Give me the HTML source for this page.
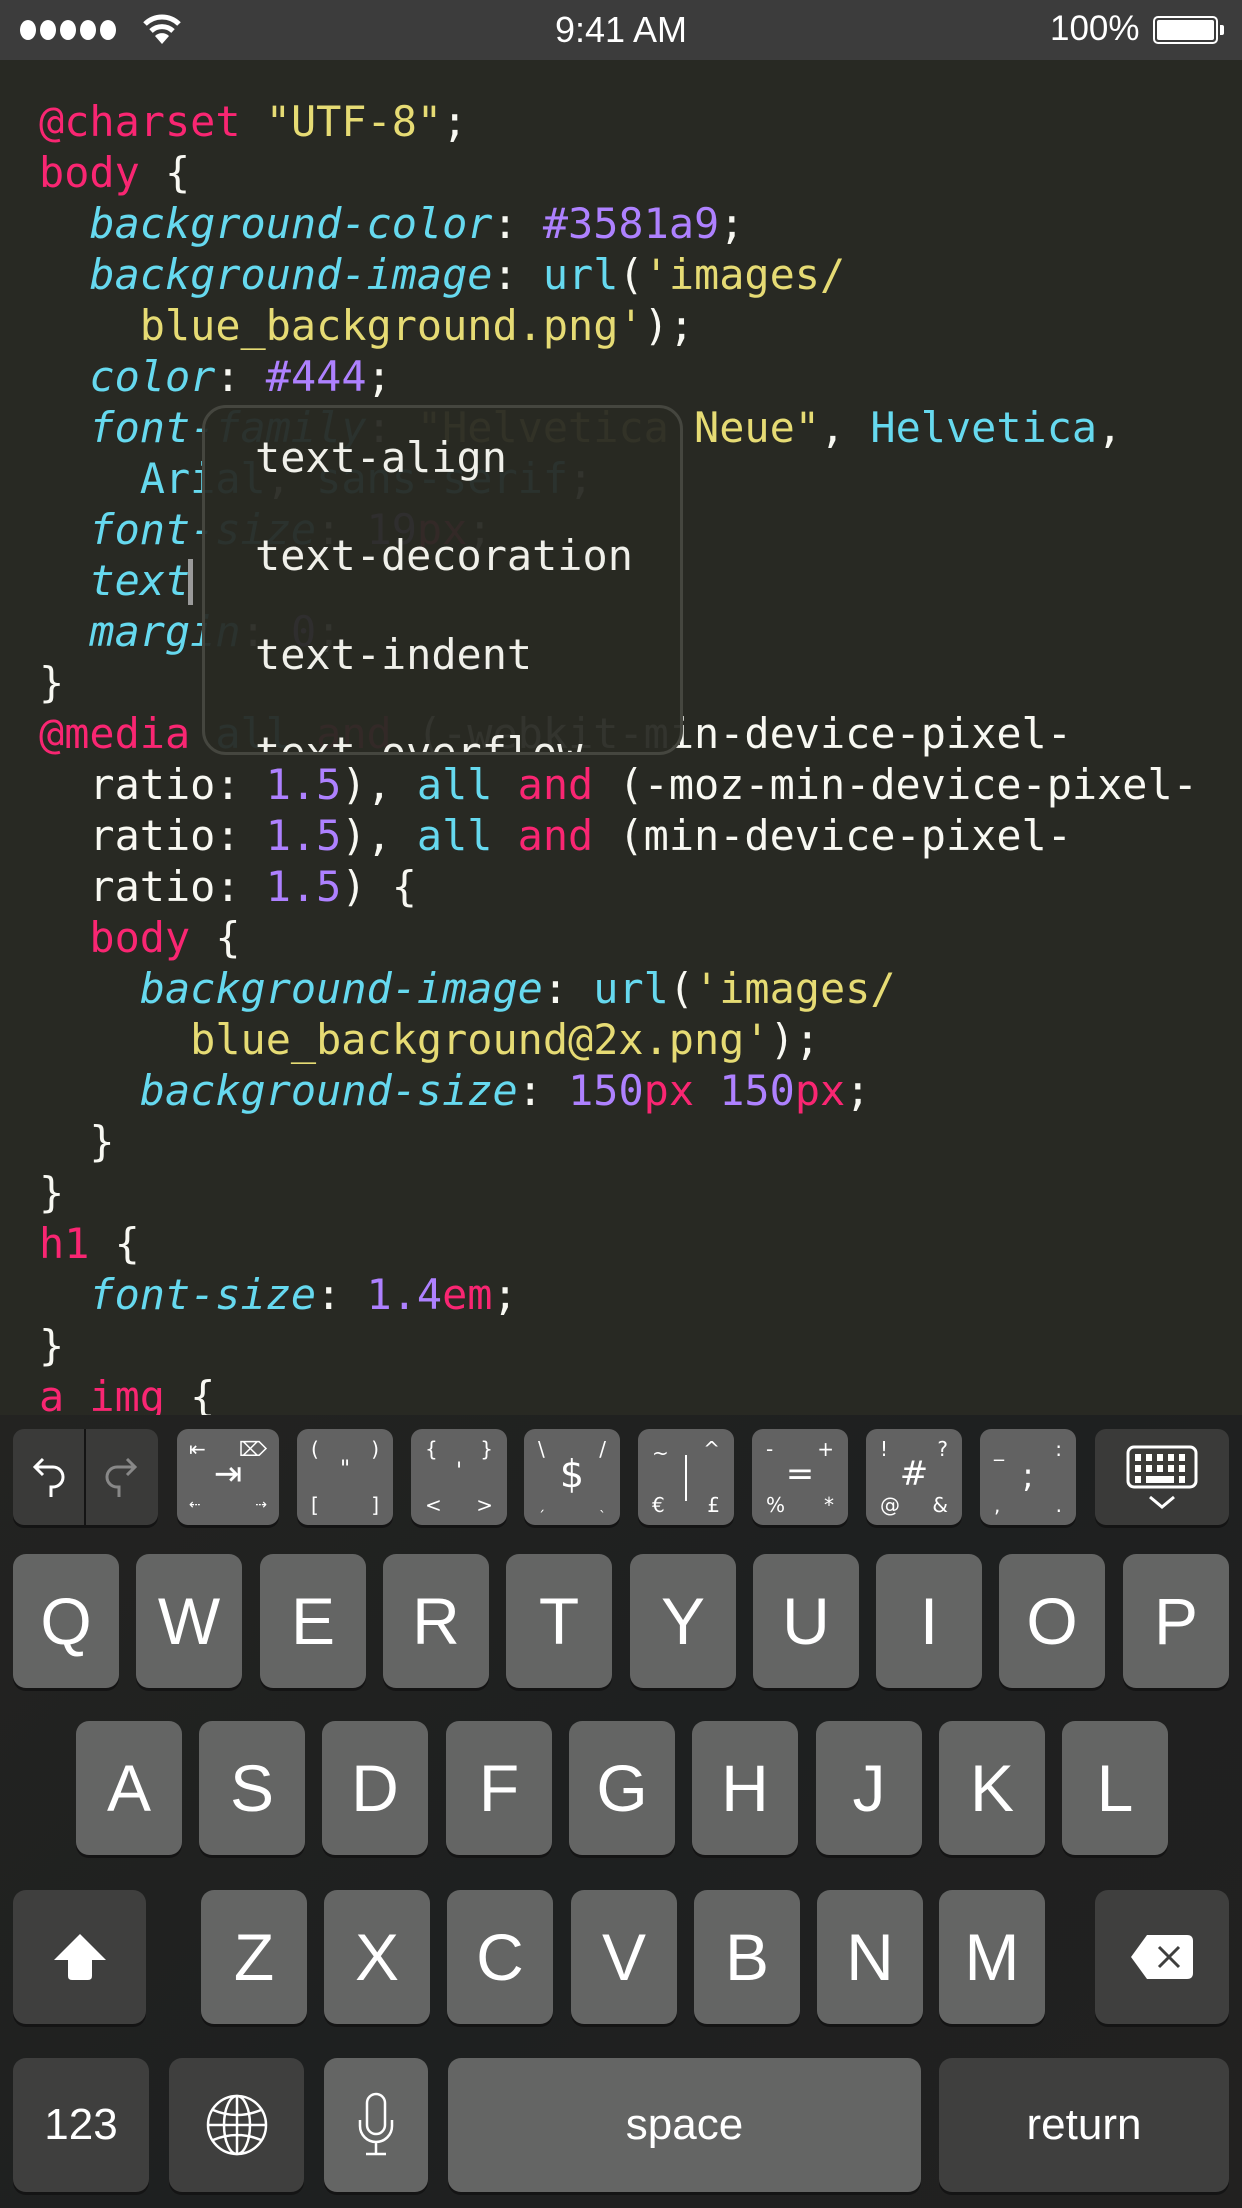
<!DOCTYPE html>
<html><head><meta charset="utf-8"><style>
*{margin:0;padding:0;box-sizing:border-box}
body{width:1242px;height:2208px;background:#282923;position:relative;overflow:hidden;font-family:"Liberation Sans",sans-serif}
#sb{position:absolute;left:0;top:0;width:1242px;height:60px;background:#3c3c3c;color:#fff}
#ed{position:absolute;left:0;top:60px;width:1242px;height:1355px;overflow:hidden;background:#282923}
pre{position:absolute;left:39px;top:36px;font-family:"DejaVu Sans Mono","Liberation Mono",monospace;font-size:41.85px;line-height:51px;color:#f8f8f2}
.p{color:#f92672}.y{color:#e6db74}.c{color:#66d9ef}.i{color:#66d9ef;font-style:italic}.v{color:#ae81ff}
.cur{display:inline-block;width:5px;height:46px;background:#9a9a9a;vertical-align:-10px;margin-left:-2px}
#pop{position:absolute;left:202px;top:345px;width:481px;height:350px;border:3px solid #45463f;border-radius:24px;background:rgba(40,41,35,0.95);overflow:hidden}
#pop div{position:absolute;left:50px;font-family:"DejaVu Sans Mono",monospace;font-size:41.85px;color:#f0f0ea;line-height:50px}
#kb{position:absolute;left:0;top:1415px;width:1242px;height:793px;background:linear-gradient(135deg,#232321,#1e2020 50%,#222120)}
.k{position:absolute;border-radius:13px;background:#646564;color:#fff;box-shadow:0 3px 0 #141414;display:flex;align-items:center;justify-content:center;font-size:66px;font-weight:300}
.d{background:#3f3f3e}
.a{position:absolute;border-radius:11px;background:#626262;box-shadow:0 3px 0 #141414;color:#fff;font-family:"DejaVu Sans",sans-serif}
.a span{position:absolute;font-size:20px;line-height:20px}
.a b{position:absolute;font-weight:normal;font-size:38px;line-height:38px;left:0;right:0;text-align:center;top:28px}
</style></head><body>
<div id="sb">
<div style="position:absolute;left:20px;top:20px;display:flex;gap:4px"><i style="width:16px;height:20px;border-radius:50%;background:#fff;display:block"></i><i style="width:16px;height:20px;border-radius:50%;background:#fff;display:block"></i><i style="width:16px;height:20px;border-radius:50%;background:#fff;display:block"></i><i style="width:16px;height:20px;border-radius:50%;background:#fff;display:block"></i><i style="width:16px;height:20px;border-radius:50%;background:#fff;display:block"></i></div>
<svg style="position:absolute;left:142px;top:14px" width="40" height="32" viewBox="0 0 40 32"><path d="M3 10 A24 24 0 0 1 37 10" stroke="#fff" stroke-width="5" fill="none"/><path d="M9 17 A16 16 0 0 1 31 17" stroke="#fff" stroke-width="5" fill="none"/><path d="M20 30 L13 22 A10 10 0 0 1 27 22 Z" fill="#fff"/></svg>
<div style="position:absolute;left:0;width:1242px;top:9px;text-align:center;font-size:36px;font-weight:500">9:41 AM</div>
<div style="position:absolute;left:1050px;top:9px;font-size:35px;font-weight:500">100%</div>
<div style="position:absolute;left:1153px;top:16px;width:65px;height:28px;border:2px solid #fff;border-radius:5px;padding:2px"><div style="width:100%;height:100%;background:#fff;border-radius:2px"></div></div>
<div style="position:absolute;left:1220px;top:25px;width:4px;height:10px;background:#fff;border-radius:0 2px 2px 0"></div>
</div>
<div id="ed"><pre><span class="p">@charset</span> <span class="y">"UTF-8"</span>;
<span class="p">body</span> {
  <span class="i">background-color</span>: <span class="v">#3581a9</span>;
  <span class="i">background-image</span>: <span class="c">url</span>(<span class="y">'images/</span>
<span class="y">    blue_background.png'</span>);
  <span class="i">color</span>: <span class="v">#444</span>;
  <span class="i">font-family</span>: <span class="y">"Helvetica Neue"</span>, <span class="c">Helvetica</span>,
    <span class="c">Arial</span>, <span class="c">sans-serif</span>;
  <span class="i">font-size</span>: <span class="v">19</span><span class="p">px</span>;
  <span class="i">text</span><span class="cur"></span>
  <span class="i">margin</span>: <span class="v">0</span>;
}
<span class="p">@media</span> <span class="c">all</span> <span class="p">and</span> (-webkit-min-device-pixel-
  ratio: <span class="v">1.5</span>), <span class="c">all</span> <span class="p">and</span> (-moz-min-device-pixel-
  ratio: <span class="v">1.5</span>), <span class="c">all</span> <span class="p">and</span> (min-device-pixel-
  ratio: <span class="v">1.5</span>) {
  <span class="p">body</span> {
    <span class="i">background-image</span>: <span class="c">url</span>(<span class="y">'images/</span>
<span class="y">      blue_background@2x.png'</span>);
    <span class="i">background-size</span>: <span class="v">150</span><span class="p">px</span> <span class="v">150</span><span class="p">px</span>;
  }
}
<span class="p">h1</span> {
  <span class="i">font-size</span>: <span class="v">1.4</span><span class="p">em</span>;
}
<span class="p">a img</span> {</pre>
<div id="pop">
<div style="top:25px">text-align</div>
<div style="top:123px">text-decoration</div>
<div style="top:222px">text-indent</div>
<div style="top:320px">text-overflow</div>
</div>
</div>
<div id="kb">
<div class="a" style="left:13px;top:14px;width:145px;height:96px;background:#3a3a39">
<div style="position:absolute;left:71px;top:0;width:2px;height:96px;background:#141414"></div>
<svg style="position:absolute;left:18px;top:26px" width="36" height="46" viewBox="0 0 36 46"><path d="M12 4 L4 12 L12 20 M4 12 H22 A10 10 0 0 1 22 32 H20 V42" stroke="#fff" stroke-width="3" fill="none"/></svg>
<svg style="position:absolute;left:90px;top:26px" width="36" height="46" viewBox="0 0 36 46"><path d="M24 4 L32 12 L24 20 M32 12 H14 A10 10 0 0 0 14 32 H16 V42" stroke="#888" stroke-width="3" fill="none"/></svg>
</div>
<div class="a" style="left:177px;top:14px;width:102px;height:96px"><span style="left:12px;top:10px">⇤</span><span style="right:12px;top:10px">⌦</span><b style="top:26px;font-size:34px">⇥</b><span style="left:12px;top:66px;font-size:14px">⇠</span><span style="right:12px;top:66px;font-size:14px">⇢</span></div>
<div class="a" style="left:297px;top:14px;width:96px;height:96px"><span style="left:14px;top:10px">(</span><span style="right:14px;top:10px">)</span><b style="top:22px;font-size:22px">"</b><span style="left:14px;top:66px">[</span><span style="right:14px;top:66px">]</span></div>
<div class="a" style="left:411px;top:14px;width:96px;height:96px"><span style="left:14px;top:10px">{</span><span style="right:14px;top:10px">}</span><b style="top:24px;font-size:22px">'</b><span style="left:14px;top:66px">&lt;</span><span style="right:14px;top:66px">&gt;</span></div>
<div class="a" style="left:524px;top:14px;width:96px;height:96px"><span style="left:14px;top:10px">\</span><span style="right:14px;top:10px">/</span><b style="top:26px">$</b><span style="left:14px;top:66px;font-size:14px">ˏ</span><span style="right:14px;top:66px;font-size:14px">ˎ</span></div>
<div class="a" style="left:638px;top:14px;width:96px;height:96px"><span style="left:14px;top:14px">~</span><span style="right:14px;top:10px">^</span><div style="position:absolute;left:47px;top:26px;width:2px;height:46px;background:#fff"></div><span style="left:14px;top:66px">€</span><span style="right:14px;top:66px">£</span></div>
<div class="a" style="left:752px;top:14px;width:96px;height:96px"><span style="left:14px;top:10px">-</span><span style="right:14px;top:10px">+</span><b style="top:26px;font-size:34px">=</b><span style="left:14px;top:66px">%</span><span style="right:14px;top:66px">*</span></div>
<div class="a" style="left:866px;top:14px;width:96px;height:96px"><span style="left:14px;top:10px">!</span><span style="right:14px;top:10px">?</span><b style="top:26px;font-size:34px">#</b><span style="left:14px;top:66px">@</span><span style="right:14px;top:66px">&amp;</span></div>
<div class="a" style="left:980px;top:14px;width:96px;height:96px"><span style="left:14px;top:10px">_</span><span style="right:14px;top:10px">:</span><b style="top:28px;font-size:34px">;</b><span style="left:14px;top:66px">,</span><span style="right:14px;top:66px">.</span></div>
<div class="a" style="left:1095px;top:14px;width:134px;height:96px;background:#3a3a39">
<svg style="position:absolute;left:31px;top:16px" width="72" height="66" viewBox="0 0 72 66"><rect x="2" y="2" width="68" height="40" rx="6" stroke="#fff" stroke-width="3" fill="none"/><g fill="#fff"><rect x="9" y="9" width="6" height="7"/><rect x="20" y="9" width="6" height="7"/><rect x="31" y="9" width="6" height="7"/><rect x="42" y="9" width="6" height="7"/><rect x="53" y="9" width="6" height="7"/><rect x="9" y="20" width="6" height="7"/><rect x="20" y="20" width="6" height="7"/><rect x="31" y="20" width="6" height="7"/><rect x="42" y="20" width="6" height="7"/><rect x="53" y="20" width="6" height="7"/><rect x="9" y="31" width="6" height="7"/><rect x="20" y="31" width="28" height="7"/><rect x="53" y="31" width="6" height="7"/></g><path d="M24 52 L36 62 L48 52" stroke="#fff" stroke-width="3" fill="none"/></svg></div>

<div class="k" style="left:13px;top:139px;width:106px;height:134px">Q</div>
<div class="k" style="left:136px;top:139px;width:106px;height:134px">W</div>
<div class="k" style="left:260px;top:139px;width:106px;height:134px">E</div>
<div class="k" style="left:383px;top:139px;width:106px;height:134px">R</div>
<div class="k" style="left:506px;top:139px;width:106px;height:134px">T</div>
<div class="k" style="left:630px;top:139px;width:106px;height:134px">Y</div>
<div class="k" style="left:753px;top:139px;width:106px;height:134px">U</div>
<div class="k" style="left:876px;top:139px;width:106px;height:134px">I</div>
<div class="k" style="left:999px;top:139px;width:106px;height:134px">O</div>
<div class="k" style="left:1123px;top:139px;width:106px;height:134px">P</div>
<div class="k" style="left:76px;top:306px;width:106px;height:134px">A</div>
<div class="k" style="left:199px;top:306px;width:106px;height:134px">S</div>
<div class="k" style="left:322px;top:306px;width:106px;height:134px">D</div>
<div class="k" style="left:446px;top:306px;width:106px;height:134px">F</div>
<div class="k" style="left:569px;top:306px;width:106px;height:134px">G</div>
<div class="k" style="left:692px;top:306px;width:106px;height:134px">H</div>
<div class="k" style="left:816px;top:306px;width:106px;height:134px">J</div>
<div class="k" style="left:939px;top:306px;width:106px;height:134px">K</div>
<div class="k" style="left:1062px;top:306px;width:106px;height:134px">L</div>
<div class="k d" style="left:13px;top:475px;width:133px;height:134px"><svg width="56" height="50" viewBox="0 0 56 50"><path d="M28 2 L54 28 H40 V44 Q40 48 36 48 H20 Q16 48 16 44 V28 H2 Z" fill="#fff"/></svg></div>
<div class="k" style="left:201px;top:475px;width:106px;height:134px">Z</div>
<div class="k" style="left:324px;top:475px;width:106px;height:134px">X</div>
<div class="k" style="left:447px;top:475px;width:106px;height:134px">C</div>
<div class="k" style="left:571px;top:475px;width:106px;height:134px">V</div>
<div class="k" style="left:694px;top:475px;width:106px;height:134px">B</div>
<div class="k" style="left:817px;top:475px;width:106px;height:134px">N</div>
<div class="k" style="left:939px;top:475px;width:106px;height:134px">M</div>
<div class="k d" style="left:1095px;top:475px;width:134px;height:134px"><svg width="66" height="48" viewBox="0 0 66 48"><path d="M18 2 H58 Q64 2 64 8 V40 Q64 46 58 46 H18 L2 24 Z" fill="#fff"/><path d="M30 14 L50 34 M50 14 L30 34" stroke="#3f3f3e" stroke-width="3"/></svg></div>
<div class="k d" style="left:13px;top:643px;width:136px;height:134px;font-size:44px">123</div>
<div class="k d" style="left:169px;top:643px;width:135px;height:134px"><svg width="62" height="62" viewBox="0 0 62 62" fill="none" stroke="#fff" stroke-width="2.5"><ellipse cx="31" cy="31" rx="29" ry="29"/><ellipse cx="31" cy="31" rx="13" ry="29"/><path d="M31 2 V60 M2 31 H60 M7 16 Q31 26 55 16 M7 46 Q31 36 55 46"/></svg></div>
<div class="k" style="left:324px;top:643px;width:104px;height:134px"><svg width="40" height="66" viewBox="0 0 40 66" fill="none" stroke="#fff" stroke-width="2.5"><rect x="11" y="2" width="18" height="40" rx="9"/><path d="M4 28 V34 A16 16 0 0 0 36 34 V28 M20 50 V62 M10 62 H30"/></svg></div>
<div class="k" style="left:448px;top:643px;width:473px;height:134px;font-size:44px">space</div>
<div class="k d" style="left:939px;top:643px;width:290px;height:134px;font-size:44px">return</div>
</div>
</body></html>
